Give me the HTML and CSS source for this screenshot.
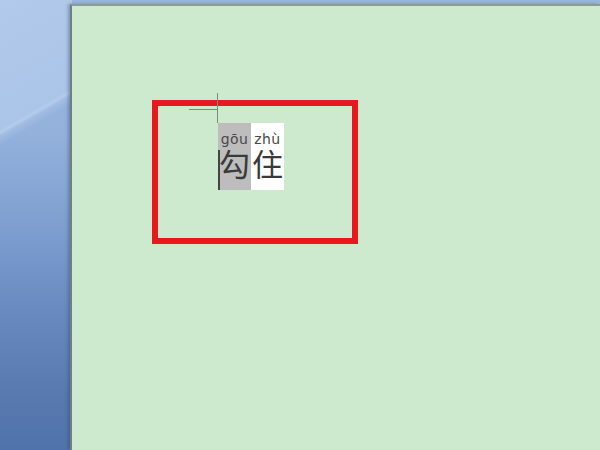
FILE: index.html
```html
<!DOCTYPE html>
<html>
<head>
<meta charset="utf-8">
<link rel="stylesheet" href="styles.css">
</head>
<body>
<div class="desk">
  <div class="page">
    <div class="frame">
      <div class="mark">
        <span class="mark-v"></span>
        <span class="mark-h"></span>
      </div>
      <div class="ruby-row">
        <div class="cell sel">
          <span class="py">gōu</span>
          <span class="hz">勾</span>
          <span class="caret"></span>
        </div>
        <div class="cell plain">
          <span class="py">zhù</span>
          <span class="hz">住</span>
        </div>
      </div>
    </div>
  </div>
</div>
</body>
</html>
```
FILE: styles.css
```css
html, body {
  margin: 0;
  padding: 0;
  width: 600px;
  height: 450px;
  overflow: hidden;
}
.desk {
  width: 600px;
  height: 450px;
  box-sizing: border-box;
  padding: 4px 0 0 70px;
  display: flex;
  background-color: #5577ae;
  background-image:
    linear-gradient(150deg, #b2caeb 0px, #abc5e8 112px, #b5cbeb 115px, rgba(170,196,232,0.6) 118px, rgba(160,190,228,0) 126px),
    linear-gradient(180deg, #9ab6de 0%, #94b1dc 30%, #7e9fd0 50%, #6889c0 70%, #5779b0 88%, #5173ab 100%);
  background-size: 72px 450px, 600px 450px;
  background-repeat: no-repeat;
}
.page {
  flex: 1;
  background: #cdeacf;
  border-left: 2px solid #6f7f86;
  border-top: 2px solid #8a9aa0;
  box-shadow: -2px 0 3px rgba(40,60,90,0.35);
  padding: 94px 0 0 80px;
}
.frame {
  width: 194px;
  height: 132px;
  border: 6px solid #e8181f;
  position: relative;
}
.mark {
  position: absolute;
  left: 31px;
  top: -13px;
  width: 30px;
  height: 30px;
}
.mark-v {
  position: absolute;
  left: 28px;
  top: 0;
  width: 1px;
  height: 30px;
  background: #7a8a80;
}
.mark-h {
  position: absolute;
  left: 0;
  top: 16px;
  width: 29px;
  height: 1px;
  background: #7a8a80;
}
.ruby-row {
  display: flex;
  margin: 17px 0 0 60px;
}
.cell {
  width: 33px;
  height: 67px;
  display: flex;
  flex-direction: column;
  align-items: center;
  position: relative;
}
.sel { background: #bdbdbd; }
.plain { background: #ffffff; }
.py {
  font-family: "DejaVu Sans", "Noto Sans", sans-serif;
  font-size: 14px;
  color: #4a4a4a;
  line-height: 14px;
  margin-top: 9px;
  letter-spacing: 0.4px;
  white-space: nowrap;
}
.hz {
  font-family: "Noto Sans CJK SC", sans-serif;
  font-size: 31px;
  line-height: 33px;
  color: #3a3a3a;
  margin-top: 0;
}
.caret {
  position: absolute;
  left: 0;
  top: 27px;
  width: 2px;
  height: 40px;
  background: #444;
}
```
